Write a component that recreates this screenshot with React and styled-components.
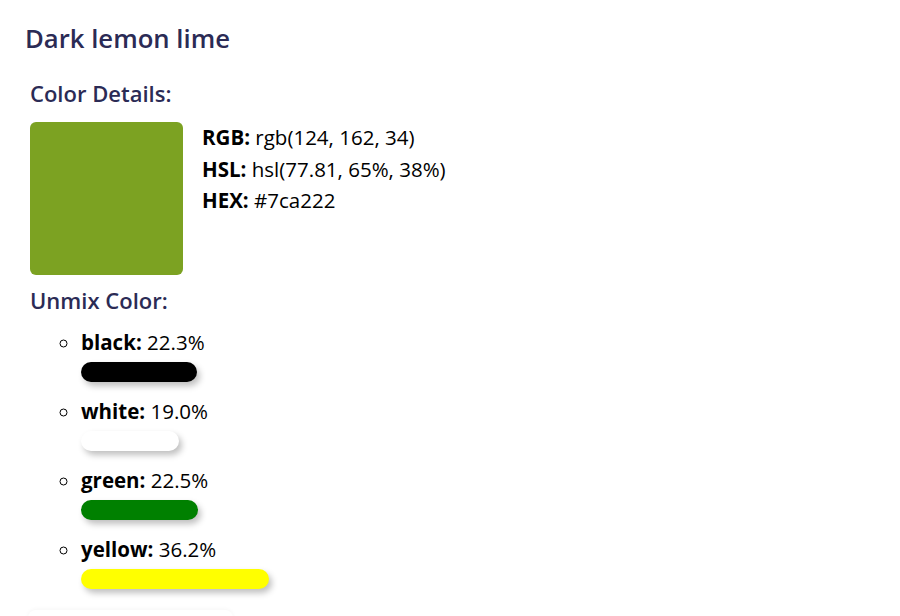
import styled, { createGlobalStyle } from 'styled-components';

const GlobalStyle = createGlobalStyle`
  html, body {
    margin: 0;
    padding: 0;
    background: #ffffff;
  }
  body {
    font-family: 'Open Sans', 'Noto Sans', sans-serif;
    color: #000000;
  }
`;

const colorInfo = {
  name: 'Dark lemon lime',
  hex: '#7ca222',
  rgb: 'rgb(124, 162, 34)',
  hsl: 'hsl(77.81, 65%, 38%)',
};

const unmix = [
  { name: 'black', pct: 22.3, color: '#000000' },
  { name: 'white', pct: 19.0, color: '#ffffff' },
  { name: 'green', pct: 22.5, color: '#008000' },
  { name: 'yellow', pct: 36.2, color: '#ffff00' },
];

const App = () => {
  return (
    <>
      <GlobalStyle />
      <Card>
        <Title>{colorInfo.name}</Title>
        <Section>
          <SectionTitle>Color Details:</SectionTitle>
          <DetailsRow>
            <Swatch $color={colorInfo.hex} />
            <InfoList>
              <InfoLine>
                <b>RGB:</b> {colorInfo.rgb}
              </InfoLine>
              <InfoLine>
                <b>HSL:</b> {colorInfo.hsl}
              </InfoLine>
              <InfoLine>
                <b>HEX:</b> {colorInfo.hex}
              </InfoLine>
            </InfoList>
          </DetailsRow>
          <SectionTitle>Unmix Color:</SectionTitle>
          <UnmixList>
            {unmix.map((item) => (
              <UnmixItem key={item.name}>
                <b>{item.name}:</b> {item.pct.toFixed(1)}%
                <Bar
                  $color={item.color}
                  style={{ width: `${item.pct * 5.18}px` }}
                />
              </UnmixItem>
            ))}
          </UnmixList>
        </Section>
        <Footer />
      </Card>
    </>
  );
};

export default App;

const Card = styled.div`
  width: 900px;
  height: 616px;
  box-sizing: border-box;
  padding: 20px 25px 0;
  overflow: hidden;
  background: #ffffff;
`;

const Title = styled.h1`
  margin: 0 0 20px;
  font-size: 25.7px;
  font-weight: 600;
  line-height: 38px;
  color: #2b2b55;
`;

const Section = styled.div`
  padding-left: 5px;
`;

const SectionTitle = styled.h2`
  margin: 0;
  font-size: 22px;
  font-weight: 600;
  line-height: 30px;
  color: #2b2b55;
`;

const DetailsRow = styled.div`
  display: flex;
  gap: 19px;
  margin-top: 14px;
  margin-bottom: 10px;
`;

const Swatch = styled.div`
  width: 153px;
  height: 153px;
  border-radius: 6px;
  background: ${({ $color }) => $color};
  flex-shrink: 0;
`;

const InfoList = styled.div`
  display: flex;
  flex-direction: column;
`;

const InfoLine = styled.div`
  font-size: 20.5px;
  line-height: 31.5px;
  b {
    font-weight: 700;
  }
`;

const UnmixList = styled.ul`
  list-style: circle;
  margin: 0;
  padding-left: 51px;
`;

const UnmixItem = styled.li`
  font-size: 20.5px;
  line-height: 28px;
  margin-top: 15px;
  &:first-child {
    margin-top: 13px;
  }
  b {
    font-weight: 700;
  }
`;

const Bar = styled.div`
  height: 20px;
  border-radius: 10px;
  margin-top: 6px;
  background: ${({ $color }) => $color};
  box-shadow: 3px 4px 6px rgba(0, 0, 0, 0.25);
`;

const Footer = styled.div`
  margin-top: 21px;
  margin-left: 3px;
  width: 205px;
  height: 30px;
  border-radius: 8px;
  box-shadow: 0 -1px 4px rgba(0, 0, 0, 0.04);
`;
